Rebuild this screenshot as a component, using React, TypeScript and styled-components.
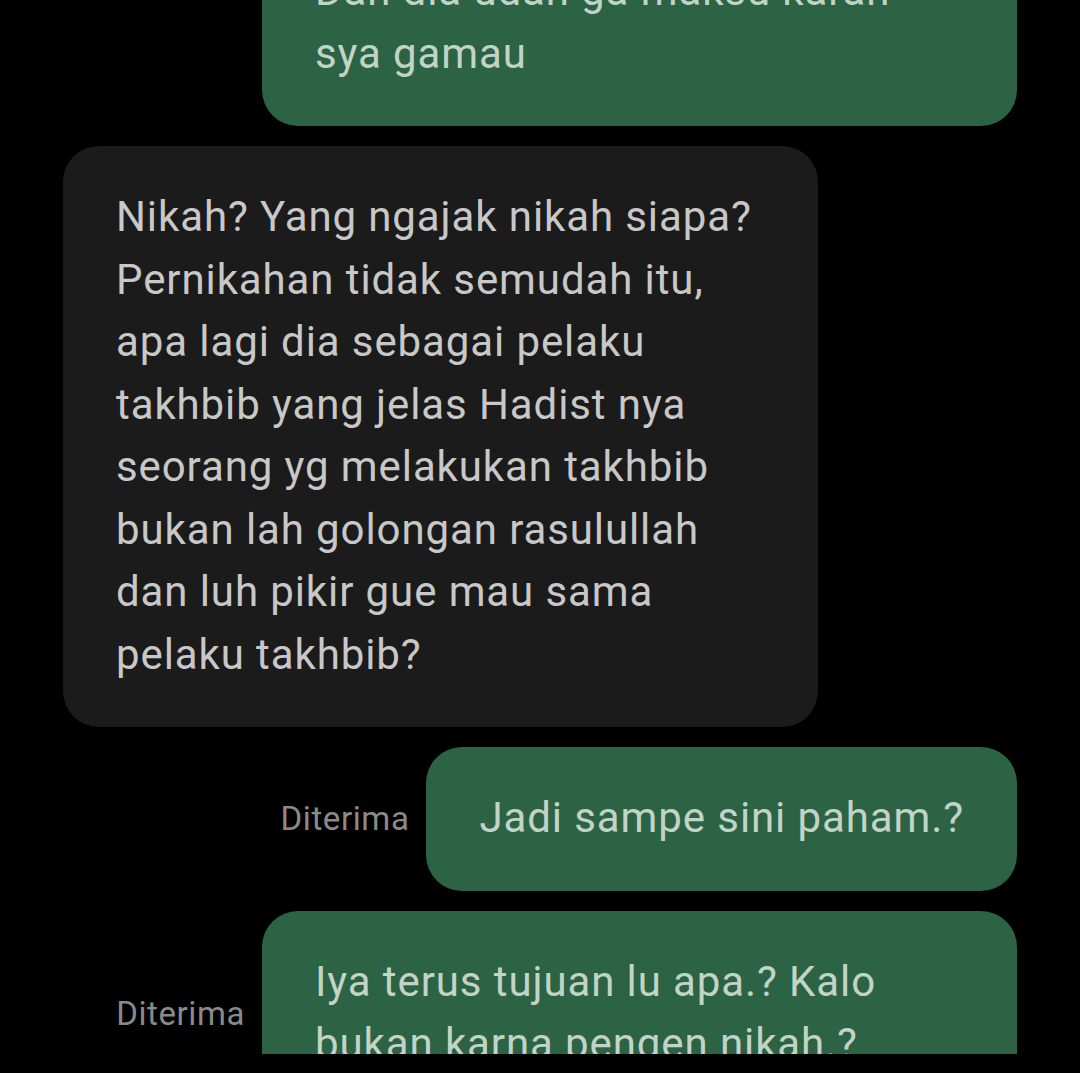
import { FC } from 'react';
import styled, { createGlobalStyle } from 'styled-components';

const GlobalStyle = createGlobalStyle`
html, body {
margin:0;
padding:0;
background:#000;
}
`;

/*----------Screen--------------------*/
const Screen = styled.div`
width:1080px;
height:1073px;
background:#000;
font-family:Roboto, "Noto Sans", sans-serif;
`;
const Viewport = styled.div`
height:1054px;
overflow:hidden;
`;
const Thread = styled.div`
display:flex;
flex-direction:column;
gap:20px;
margin-top:-80px;
padding:0 63px;
`;
/*----------Rows--------------------*/
const Row = styled.div<{ $out?: boolean }>`
display:flex;
align-items:center;
justify-content:${p => (p.$out ? 'flex-end' : 'flex-start')};
gap:17px;
`;
const Status = styled.span`
font-size:33px;
color:#8a8a8a;
letter-spacing:0.6px;
`;
/*----------Bubble--------------------*/
const Bubble = styled.div<{ $out?: boolean; $wide?: boolean }>`
box-sizing:border-box;
width:${p => (p.$wide ? '755px' : 'auto')};
padding:40px 53px 41px;
border-radius:36px;
background:${p => (p.$out ? '#2c6344' : '#1b1b1b')};
color:${p => (p.$out ? '#c2d3c7' : '#c8c8c8')};
font-size:42px;
letter-spacing:0.9px;
line-height:62.5px;
white-space:nowrap;
`;

type Msg = { out?: boolean; lines: string[]; status?: string; wide?: boolean };

const messages: Msg[] = [
    { out: true, wide: true, lines: ['Dan dia udah ga maksu karan', 'sya gamau'] },
    {
        wide: true,
        lines: [
            'Nikah? Yang ngajak nikah siapa?',
            'Pernikahan tidak semudah itu,',
            'apa lagi dia sebagai pelaku',
            'takhbib yang jelas Hadist nya',
            'seorang yg melakukan takhbib',
            'bukan lah golongan rasulullah',
            'dan luh pikir gue mau sama',
            'pelaku takhbib?',
        ],
    },
    { out: true, status: 'Diterima', lines: ['Jadi sampe sini paham.?'] },
    { out: true, wide: true, status: 'Diterima', lines: ['Iya terus tujuan lu apa.? Kalo', 'bukan karna pengen nikah.?'] },
];

const App: FC = () => {
    return (
        <Screen>
            <GlobalStyle />
            <Viewport>
                <Thread>
                    {messages.map((m, i) => (
                        <Row key={i} $out={m.out}>
                            {m.status && <Status>{m.status}</Status>}
                            <Bubble $out={m.out} $wide={m.wide}>
                                {m.lines.map((l, j) => (
                                    <div key={j}>{l}</div>
                                ))}
                            </Bubble>
                        </Row>
                    ))}
                </Thread>
            </Viewport>
        </Screen>
    );
};
export default App;
